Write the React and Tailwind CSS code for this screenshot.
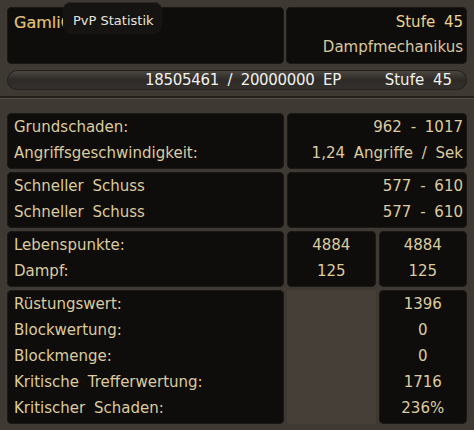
import React from 'react';

const font = { fontFamily: '"DejaVu Sans", Verdana, sans-serif' };

const sections = [
  {
    rows: [
      ['Grundschaden:', '962 - 1017'],
      ['Angriffsgeschwindigkeit:', '1,24 Angriffe / Sek'],
    ],
  },
  {
    rows: [
      ['Schneller Schuss', '577 - 610'],
      ['Schneller Schuss', '577 - 610'],
    ],
  },
];

const vitals = [
  ['Lebenspunkte:', '4884', '4884'],
  ['Dampf:', '125', '125'],
];

const defense = [
  ['Rüstungswert:', '1396'],
  ['Blockwertung:', '0'],
  ['Blockmenge:', '0'],
  ['Kritische Trefferwertung:', '1716'],
  ['Kritischer Schaden:', '236%'],
];

function Box({ className = '', children }) {
  return (
    <div className={`bg-[#0e0d0b] rounded-[5px] shadow-[inset_0_0_0_1px_#1b1915] ${className}`}>
      {children}
    </div>
  );
}

export default function App() {
  return (
    <div
      className="relative w-[474px] h-[430px] overflow-hidden bg-[#3e3a33] text-[15px] text-[#dccb9f] [word-spacing:4px] whitespace-nowrap"
      style={font}
    >
      {/* kopf */}
      <div className="px-[7px] pt-[7px]">
        <div className="grid grid-cols-[277px_1fr] gap-[2px] h-[57px]">
          <Box className="pl-[7px] pt-[3px] leading-[25px]">
            <div className="text-[16px] text-[#e3c27a] [-webkit-text-stroke:0.2px_#e3c27a]">GamliC</div>
          </Box>
          <Box className="pr-[4px] pt-[3px] leading-[25px] text-right">
            <div className="text-[#ecd28e]">Stufe 45</div>
            <div className="text-[#d8c8a0]">Dampfmechanikus</div>
          </Box>
        </div>

        {/* EP-Leiste */}
        <div className="mt-[6px] h-[20px] rounded-full bg-gradient-to-b from-[#4e4a44] via-[#2d2a27] to-[#34312d] shadow-[inset_0_0_0_1px_#24221f] flex items-center text-[#f1f0ec] leading-[20px]">
          <div className="ml-[138px] tracking-[-0.3px] [word-spacing:4px]">18505461 / 20000000 EP</div>
          <div className="ml-auto mr-[15px]">Stufe 45</div>
        </div>
      </div>

      {/* trenner */}
      <div className="mt-[6px] h-[2px] bg-[#24211d]" />
      <div className="h-[1px] bg-[#56504a]" />

      {/* werte */}
      <div className="px-[7px] pt-[14px] flex flex-col gap-[3px]">
        {sections.map((s, i) => (
          <div key={i} className="grid grid-cols-[277px_1fr] gap-[3px] h-[56px]">
            <Box className="pl-[7px] pt-[1px] leading-[26px]">
              {s.rows.map((r, j) => (
                <div key={j}>{r[0]}</div>
              ))}
            </Box>
            <Box className="pr-[4px] pt-[1px] leading-[26px] text-right">
              {s.rows.map((r, j) => (
                <div key={j}>{r[1]}</div>
              ))}
            </Box>
          </div>
        ))}

        <div className="grid grid-cols-[277px_1fr_1fr] gap-[3px] h-[56px]">
          <Box className="pl-[7px] pt-[1px] leading-[26px]">
            {vitals.map((r) => (
              <div key={r[0]}>{r[0]}</div>
            ))}
          </Box>
          <Box className="pt-[1px] leading-[26px] text-center">
            {vitals.map((r) => (
              <div key={r[0]}>{r[1]}</div>
            ))}
          </Box>
          <Box className="pt-[1px] leading-[26px] text-center">
            {vitals.map((r) => (
              <div key={r[0]}>{r[2]}</div>
            ))}
          </Box>
        </div>

        <div className="grid grid-cols-[277px_1fr_1fr] gap-[3px] h-[134px]">
          <Box className="pl-[7px] pt-[1px] leading-[26px]">
            {defense.map((r) => (
              <div key={r[0]}>{r[0]}</div>
            ))}
          </Box>
          <div className="bg-[#463f37] rounded-[3px]" />
          <Box className="pt-[1px] leading-[26px] text-center">
            {defense.map((r) => (
              <div key={r[0]}>{r[1]}</div>
            ))}
          </Box>
        </div>
      </div>

      {/* tooltip */}
      <div className="absolute left-[63px] top-[2px] w-[99px] h-[32px] rounded-[8px] bg-[#151412] shadow-[inset_0_1px_0_#2a2824] pl-[10px] pt-[11px] text-[13px] leading-[16px] text-[#e6e4df] [word-spacing:0px]">
        PvP Statistik
      </div>
    </div>
  );
}
